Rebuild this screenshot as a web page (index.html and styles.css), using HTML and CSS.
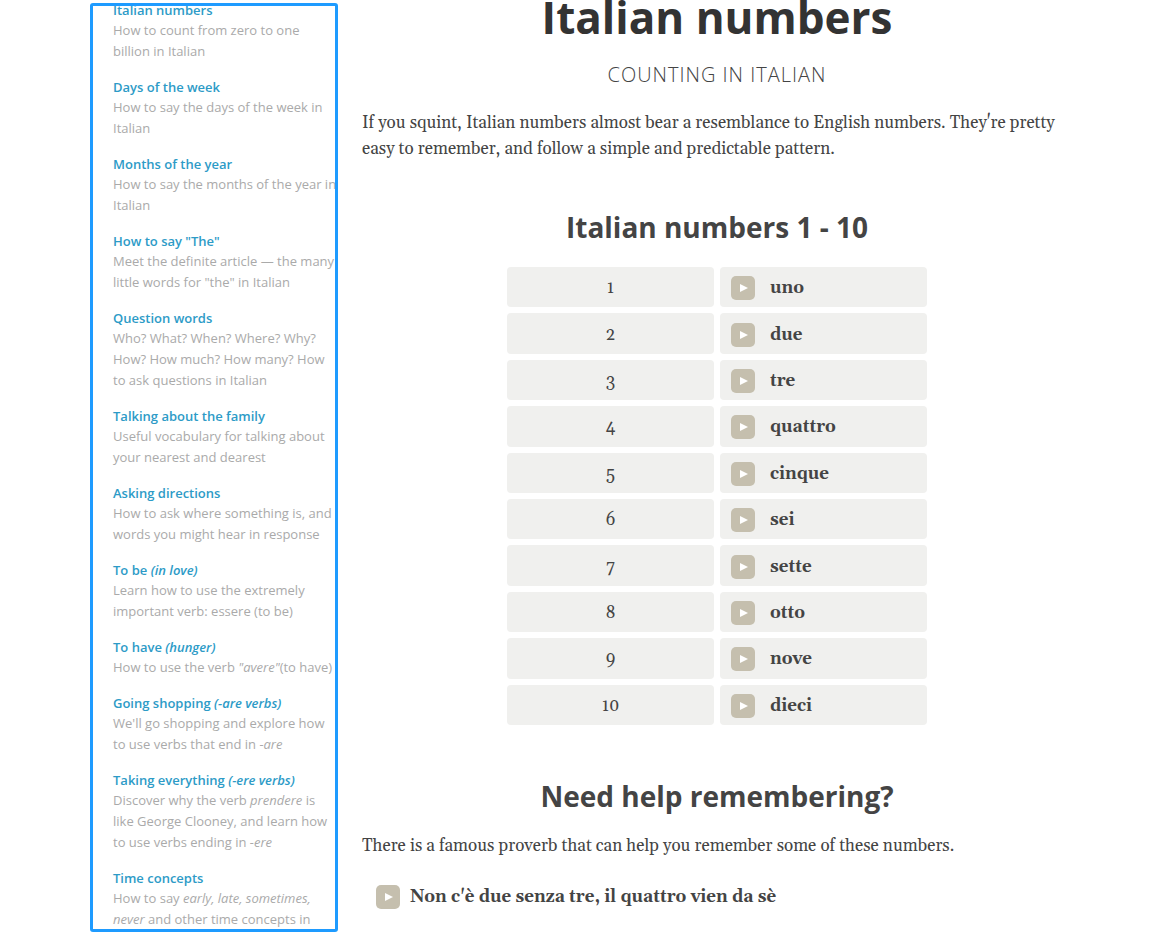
FILE: index.html
```html
<!DOCTYPE html>
<html lang="en">
<head>
    <meta charset="UTF-8">
    <meta name="viewport" content="width=device-width, initial-scale=1.0">
    <title>Italian numbers</title>
    <link rel="stylesheet" href="styles.css">
</head>
<body>

    <div class="page">
        <!-- Lesson list -->
        <nav class="sidebar">
            <ul class="lessons">
                <li><a href="#">Italian numbers</a><p>How to count from zero to one billion in Italian</p></li>
                <li><a href="#">Days of the week</a><p>How to say the days of the week in Italian</p></li>
                <li><a href="#">Months of the year</a><p>How to say the months of the year in Italian</p></li>
                <li><a href="#">How to say "The"</a><p>Meet the definite article — the many little words for "the" in Italian</p></li>
                <li><a href="#">Question words</a><p>Who? What? When? Where? Why? How? How much? How many? How to ask questions in Italian</p></li>
                <li><a href="#">Talking about the family</a><p>Useful vocabulary for talking about your nearest and dearest</p></li>
                <li><a href="#">Asking directions</a><p>How to ask where something is, and words you might hear in response</p></li>
                <li><a href="#">To be <em>(in love)</em></a><p>Learn how to use the extremely important verb: essere (to be)</p></li>
                <li><a href="#">To have <em>(hunger)</em></a><p>How to use the verb <em>"avere"</em>(to have)</p></li>
                <li><a href="#">Going shopping <em>(-are verbs)</em></a><p>We'll go shopping and explore how to use verbs that end in <em>-are</em></p></li>
                <li><a href="#">Taking everything <em>(-ere verbs)</em></a><p>Discover why the verb <em>prendere</em> is like George Clooney, and learn how to use verbs ending in <em>-ere</em></p></li>
                <li><a href="#">Time concepts</a><p>How to say <em>early, late, sometimes, never</em> and other time concepts in</p></li>
            </ul>
        </nav>

        <main class="content">
            <h1>Italian numbers</h1>
            <p class="subtitle">Counting in Italian</p>
            <p>If you squint, Italian numbers almost bear a resemblance to English numbers. They're pretty easy to remember, and follow a simple and predictable pattern.</p>

            <h2>Italian numbers 1 - 10</h2>
            <table class="numbers">
                <tbody>
                    <tr><td>1</td><td><div class="phrase"><button class="play" aria-label="Play uno"></button><b>uno</b></div></td></tr>
                    <tr><td>2</td><td><div class="phrase"><button class="play" aria-label="Play due"></button><b>due</b></div></td></tr>
                    <tr><td>3</td><td><div class="phrase"><button class="play" aria-label="Play tre"></button><b>tre</b></div></td></tr>
                    <tr><td>4</td><td><div class="phrase"><button class="play" aria-label="Play quattro"></button><b>quattro</b></div></td></tr>
                    <tr><td>5</td><td><div class="phrase"><button class="play" aria-label="Play cinque"></button><b>cinque</b></div></td></tr>
                    <tr><td>6</td><td><div class="phrase"><button class="play" aria-label="Play sei"></button><b>sei</b></div></td></tr>
                    <tr><td>7</td><td><div class="phrase"><button class="play" aria-label="Play sette"></button><b>sette</b></div></td></tr>
                    <tr><td>8</td><td><div class="phrase"><button class="play" aria-label="Play otto"></button><b>otto</b></div></td></tr>
                    <tr><td>9</td><td><div class="phrase"><button class="play" aria-label="Play nove"></button><b>nove</b></div></td></tr>
                    <tr><td>10</td><td><div class="phrase"><button class="play" aria-label="Play dieci"></button><b>dieci</b></div></td></tr>
                </tbody>
            </table>

            <h2>Need help remembering?</h2>
            <p class="intro">There is a famous proverb that can help you remember some of these numbers.</p>
            <div class="phrase proverb"><button class="play" aria-label="Play proverb"></button><b>Non c'è due senza tre, il quattro vien da sè</b></div>
        </main>
    </div>

</body>
</html>
```
FILE: styles.css
```css
* {
    box-sizing: border-box;
}
body {
    margin: 0;
    background: #fff;
    color: #444;
    font-family: Georgia, Gelasio, "Liberation Serif", serif;
    font-size: 17px;
    line-height: 26px;
}
.page {
    display: grid;
    grid-template-columns: 248px 1fr;
    gap: 24px;
    height: 100vh;
    padding: 0 101px 0 90px;
    overflow: hidden;
}

/* Sidebar */
.sidebar {
    height: calc(100vh - 4px);
    margin-top: 3px;
    border: 3px solid #1e9bff;
    border-radius: 3px;
    overflow: hidden;
    font-family: "Open Sans", sans-serif;
    font-size: 13px;
    line-height: 21px;
}
.lessons {
    list-style: none;
    margin: -6px -3px 0 0;
    padding: 0 0 0 20px;
}
.lessons li {
    margin-bottom: 15px;
}
.lessons a {
    display: block;
    color: #2d9bc7;
    font-weight: 600;
    line-height: 20px;
    text-decoration: none;
}
.lessons p {
    margin: 0;
    color: #aaa;
    font-weight: 400;
}

/* Main column */
.content p {
    margin: 0;
}
h1, h2 {
    margin: 0;
    font-family: "Open Sans", sans-serif;
    font-weight: 700;
    text-align: center;
}
h1 {
    color: #333;
    font-size: 44px;
    line-height: 34px;
}
h2 {
    margin-top: 47px;
    font-size: 28px;
    line-height: 36px;
}
.content .subtitle {
    margin: 28px 0 22px;
    font-family: "Open Sans", sans-serif;
    font-size: 20px;
    font-weight: 300;
    letter-spacing: 1px;
    text-align: center;
    text-transform: uppercase;
}
.content .intro {
    margin-top: 19px;
}

/* Numbers table */
.numbers {
    width: 432px;
    height: 470px;
    margin: 16px auto 0;
    border-collapse: separate;
    border-spacing: 6px;
    table-layout: fixed;
}
.numbers td {
    padding: 2px 11px 0;
    background: #f0f0ee;
    border-radius: 4px;
    text-align: center;
}
.phrase {
    display: flex;
    align-items: center;
    gap: 15px;
}
.play {
    display: flex;
    align-items: center;
    justify-content: center;
    width: 24px;
    height: 24px;
    padding: 0;
    border: none;
    border-radius: 5px;
    background: #c5bfae;
    cursor: pointer;
}
.play::before {
    content: "";
    margin-left: 2px;
    border-left: 8px solid #fff;
    border-top: 4px solid transparent;
    border-bottom: 4px solid transparent;
}
.proverb {
    gap: 10px;
    margin: 25px 14px 0;
}
```
